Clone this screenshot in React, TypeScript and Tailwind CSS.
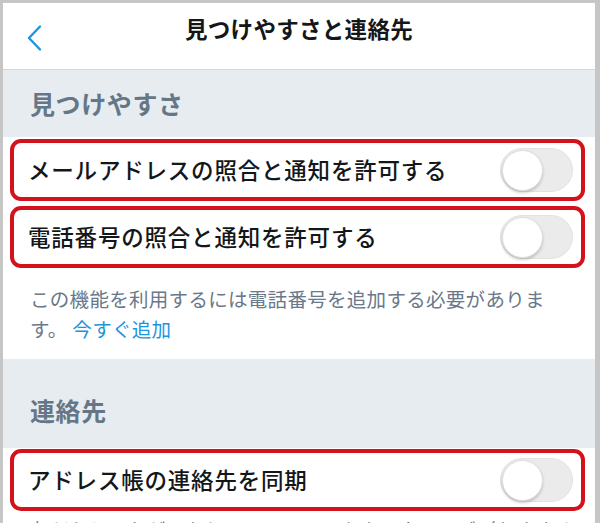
const FONT = '"Noto Sans CJK JP", "Noto Sans", sans-serif';

function Toggle() {
  return (
    <div className="w-[73px] h-[44px] rounded-full bg-[#ebebeb] border border-[#e2e2e2] shrink-0 flex items-center px-px">
      <div className="w-[41px] h-[41px] rounded-full bg-white border border-[#dedede] shadow-[0_2px_3px_rgba(0,0,0,0.18)]" />
    </div>
  );
}

function Row({ label }: { label: string }) {
  return (
    <div className="ml-[7px] w-[575px] h-[62px] border-[4px] border-[#d3121c] rounded-[11px] flex items-center justify-between pl-[14px] pr-[8px]">
      <span className="text-[22.5px] font-medium text-[#14171a] tracking-[0.8px]">{label}</span>
      <Toggle />
    </div>
  );
}

export default function App() {
  return (
    <div className="w-[600px] h-[523px] overflow-hidden bg-[#c6c6c6] pt-[3px] pl-[3px] pr-[5px]" style={{ fontFamily: FONT }}>
      <div className="bg-white h-full flex flex-col">
        <div className="h-[67px] border-b border-[#d3d8dc] relative flex justify-center items-start shrink-0">
          <svg className="absolute left-[24px] top-[22px]" width="15" height="26" viewBox="0 0 15 26" fill="none">
            <polyline points="13,1.5 2,13 13,24.5" stroke="#1b95e0" strokeWidth="2.4" strokeLinecap="round" strokeLinejoin="round" />
          </svg>
          <span className="mt-[9px] text-[22.5px] font-bold text-[#14171a] tracking-[0.3px]">見つけやすさと連絡先</span>
        </div>
        <div className="h-[67px] bg-[#e6ecf0] flex items-center pl-[27px] shrink-0">
          <span className="text-[25px] font-bold text-[#657786] tracking-[0.6px]">見つけやすさ</span>
        </div>
        <div className="pt-[2px] flex flex-col gap-[5px] shrink-0">
          <Row label="メールアドレスの照合と通知を許可する" />
          <Row label="電話番号の照合と通知を許可する" />
        </div>
        <div className="h-[91px] pt-[16px] pl-[27px] shrink-0">
          <p className="w-[540px] text-[19.5px] leading-[30px] text-[#69788a] tracking-[0.3px]">
            この機能を利用するには電話番号を追加する必要があります。 <span className="text-[#1b95e0]">今すぐ追加</span>
          </p>
        </div>
        <div className="h-[89px] bg-[#e6ecf0] flex items-center pt-[15px] pl-[27px] shrink-0">
          <span className="text-[25px] font-bold text-[#657786] tracking-[0.6px]">連絡先</span>
        </div>
        <div className="pt-[1px] shrink-0">
          <Row label="アドレス帳の連絡先を同期" />
        </div>
        <div className="pt-[4px] pl-[27px] shrink-0">
          <p className="text-[19.5px] leading-[30px] text-[#69788a] whitespace-nowrap">友だちとつながったり、コンテンツをカスタマイズ（おすすめ</p>
        </div>
      </div>
    </div>
  );
}
